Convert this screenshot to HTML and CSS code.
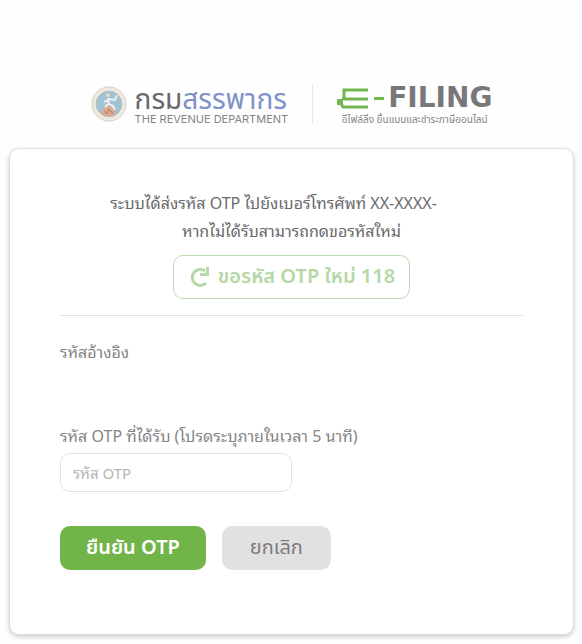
FILE: index.html
```html
<!DOCTYPE html>
<html lang="th">

<head>
    <meta charset="UTF-8">
    <meta name="viewport" content="width=device-width, initial-scale=1.0">
    <title>E-Filing</title>
    <link rel="stylesheet" href="styles.css">
</head>

<body>
    <header class="header">
        <div class="brand">
            <svg class="seal" viewBox="0 0 36 36" aria-hidden="true">
                <circle cx="18" cy="18" r="17" fill="#f3f1ea" stroke="#d5cdbd" />
                <circle cx="18" cy="18" r="15" fill="none" stroke="#d8d0c0" stroke-dasharray="1 1" />
                <circle cx="18" cy="18" r="13" fill="#9fc3d2" stroke="#c4bfae" />
                <path d="M10 28l2-5 4-3 6 1 3 5-3 4h-8z" fill="#d9ab92" />
                <path d="M13 25l3 3 2-5 4 5" fill="none" stroke="#b9785f" />
                <path d="M17 12l1 6 4 2 2 4M18 14l-5 2M18 13l6 1 2-5M17 18l-3 3" fill="none" stroke="#eef1f0" stroke-width="2" />
                <circle cx="17" cy="9" r="2" fill="#eadbc8" />
            </svg>
            <div class="department">
                <p class="department-name">กรม<span>สรรพากร</span></p>
                <p class="department-sub">THE REVENUE DEPARTMENT</p>
            </div>
        </div>
        <div class="product">
            <div class="product-name">
                <svg class="product-mark" viewBox="0 0 48 22" role="img" aria-label="E-">
                    <path d="M31 3H7v9M5 12h26M3 15l3 5h25" fill="none" stroke="#72b650" stroke-width="3" />
                    <path d="M0 12h6v6H0zM37 10h10v3H37z" fill="#72b650" />
                </svg>
                <p>FILING</p>
            </div>
            <p class="product-sub">อีไฟล์ลิ่ง ยื่นแบบและชำระภาษีออนไลน์</p>
        </div>
    </header>

    <main class="card">
        <div class="message">
            <p class="sent">ระบบได้ส่งรหัส OTP ไปยังเบอร์โทรศัพท์ XX-XXXX-</p>
            <p>หากไม่ได้รับสามารถกดขอรหัสใหม่</p>
            <button class="resend" type="button">
                <svg viewBox="0 0 22 22" aria-hidden="true">
                    <path d="M18 17A8 8 0 1 1 17 5" fill="none" stroke="currentColor" stroke-width="3" />
                    <path d="M18 1h3v9h-9V7h6z" fill="currentColor" />
                </svg>
                ขอรหัส OTP ใหม่ 118
            </button>
        </div>

        <form class="otp-form">
            <p class="reference">รหัสอ้างอิง</p>
            <label for="otp">รหัส OTP ที่ได้รับ (โปรดระบุภายในเวลา 5 นาที)</label>
            <input class="otp" id="otp" type="text" placeholder="รหัส OTP">
            <div class="actions">
                <button class="confirm" type="submit">ยืนยัน OTP</button>
                <button class="cancel" type="button">ยกเลิก</button>
            </div>
        </form>
    </main>
</body>

</html>
```
FILE: styles.css
```css
* {
    margin: 0;
    padding: 0;
    box-sizing: border-box;
}

body {
    padding: 84px 8px 8px 9px;
    background-color: #fefefe;
    color: #69696b;
    font-family: "Noto Sans", "Noto Sans Thai Looped", "Noto Sans Thai", sans-serif;
    font-size: 16px;
}

.header {
    display: flex;
    justify-content: center;
    height: 64px;
    font-family: "Noto Sans", "Noto Sans Thai", sans-serif;
}

.brand {
    display: flex;
    align-items: flex-start;
    gap: 8px;
    height: 40px;
    padding-right: 24px;
    border-right: 1px solid #e8e8e8;
}

.seal {
    width: 36px;
    height: 40px;
}

.department-name {
    color: #68686c;
    font-size: 28px;
    line-height: 28px;
}

.department-name span {
    color: #7f93c9;
}

.department-sub {
    color: #858588;
    font-family: Inter, sans-serif;
    font-size: 11px;
    line-height: 14px;
}

.product {
    padding-left: 24px;
}

.product-name {
    display: flex;
    align-items: center;
    gap: 3px;
    height: 28px;
    color: #78787a;
    font-family: "DejaVu Sans", sans-serif;
    font-size: 28px;
    font-weight: 700;
    line-height: 28px;
}

.product-mark {
    width: 48px;
    height: 22px;
}

.product-sub {
    color: #858588;
    font-size: 10px;
    line-height: 14px;
    text-align: center;
}

.card {
    padding: 40px 50px 64px;
    background-color: #fff;
    border: 1px solid #dedede;
    border-radius: 10px;
    box-shadow: 0 2px 5px rgba(0, 0, 0, .2);
}

.message {
    padding-bottom: 16px;
    border-bottom: 1px solid #e2e2e2;
    line-height: 28px;
    text-align: center;
}

.sent {
    padding-right: 36px;
}

button {
    height: 44px;
    border: none;
    border-radius: 10px;
    font-family: "Noto Sans", "Noto Sans Thai", sans-serif;
    font-size: 20px;
    cursor: pointer;
}

.resend {
    display: inline-flex;
    align-items: center;
    gap: 8px;
    margin-top: 10px;
    padding: 0 14px;
    background-color: #fff;
    border: 1px solid #bddbb0;
    color: #b6d7a6;
    font-weight: 600;
}

.resend svg {
    width: 22px;
    height: 22px;
}

.otp-form {
    padding-top: 22px;
    color: #858585;
}

.reference {
    height: 84px;
    line-height: 28px;
}

.otp-form label {
    display: block;
    line-height: 28px;
}

.otp {
    display: block;
    width: 50%;
    height: 39px;
    margin-top: 3px;
    padding: 0 12px;
    background-color: #fff;
    border: 1px solid #e2e2e2;
    border-radius: 10px;
    color: #69696b;
    font-family: inherit;
    font-size: 15px;
}

.otp::placeholder {
    color: #b5b5b5;
}

.actions {
    display: flex;
    gap: 16px;
    margin-top: 34px;
}

.confirm {
    padding: 0 26px;
    background-color: #70b44a;
    color: #fff;
    font-weight: 600;
}

.cancel {
    padding: 0 28px;
    background-color: #e1e1e1;
    color: #7c7c7c;
}
```
